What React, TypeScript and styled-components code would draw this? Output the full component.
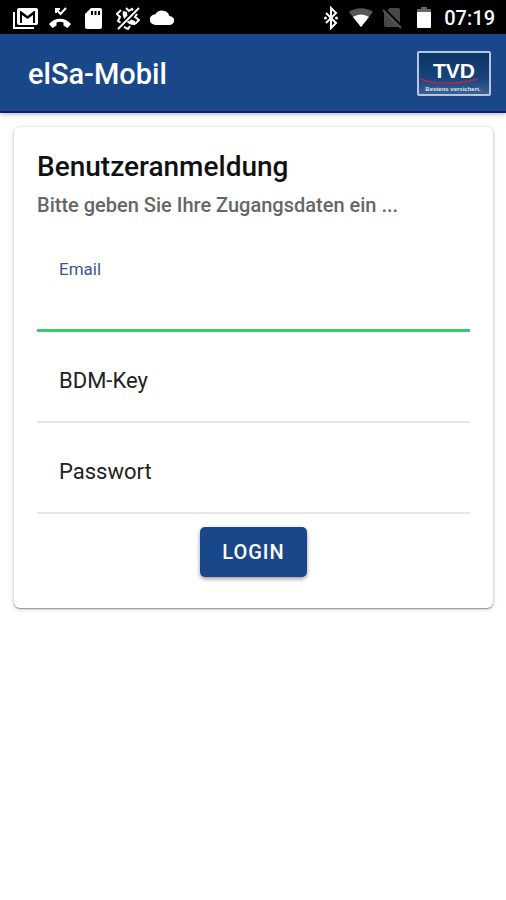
import React, { ReactNode } from "react";
import styled, { createGlobalStyle, css } from "styled-components";

const blue = "#1a4789";

const GlobalStyle = createGlobalStyle`
  * { box-sizing: border-box; }
  body {
    margin: 0;
    background: #fff;
    color: #111;
    font-family: Roboto, "Liberation Sans", sans-serif;
  }
`;

const Page = styled.div`
  display: flex;
  flex-direction: column;
  min-height: 100vh;
  background: #fff;
`;

const Content = styled.main`
  flex: 1;
  padding: 14px 13px 14px 14px;
`;

const StatusBar = styled.div`
  display: flex;
  align-items: center;
  justify-content: space-between;
  height: 34px;
  padding: 2px 11px 0 12px;
  background: #000;
  color: #fff;
`;

const IconRow = styled.div<{ $gap: number }>`
  display: flex;
  align-items: center;
  gap: ${(p) => p.$gap}px;
`;

const StatusSvg = styled.svg`
  display: block;
  flex: none;
  fill: #fff;
`;

const Clock = styled.time`
  font-size: 20px;
  font-weight: 500;
  line-height: 24px;
`;

const Header = styled.header`
  display: flex;
  align-items: center;
  justify-content: space-between;
  height: 79px;
  padding: 2px 15px 0 28px;
  background: ${blue};
  border-bottom: 2px solid #0d1f7c;
  box-shadow: 0 1px 5px rgba(0, 0, 0, 0.3);
`;

const AppTitle = styled.h1`
  margin: 0;
  color: #fff;
  font-size: 29px;
  font-weight: 500;
  line-height: 36px;
`;

const Card = styled.section`
  padding: 24px 23px 31px;
  border-radius: 6px;
  background: #fff;
  box-shadow: 0 1px 1px rgba(0, 0, 0, 0.3), 0 1px 4px rgba(0, 0, 0, 0.25);
`;

const CardTitle = styled.h2`
  margin: 0;
  font-size: 28px;
  font-weight: 500;
  line-height: 32px;
`;

const CardSubtitle = styled.p`
  margin: 10px 0 22px;
  color: #666;
  font-size: 20px;
  font-weight: 500;
  line-height: 24px;
`;

const FieldBox = styled.div<{ $active?: boolean }>`
  display: grid;
  height: 91px;
  padding: 9px 22px 0;
  border-bottom: 2px solid #e6e6e6;
  align-items: center;
  ${(p) =>
    p.$active &&
    css`
      height: 93px;
      padding-top: 0;
      grid-template-rows: 20px 50px;
      align-content: end;
      border-bottom: 3px solid #3cc870;
    `}
`;

const FieldLabel = styled.label<{ $active?: boolean }>`
  grid-area: 1 / 1;
  font-size: ${(p) => (p.$active ? 17 : 22)}px;
  line-height: ${(p) => (p.$active ? 20 : 28)}px;
  color: ${(p) => (p.$active ? "#3c5795" : "#222")};
`;

const FieldInput = styled.input<{ $active?: boolean }>`
  grid-area: ${(p) => (p.$active ? 2 : 1)} / 1;
  width: 100%;
  height: 44px;
  padding: 0;
  border: 0;
  outline: 0;
  background: transparent;
  font: inherit;
  font-size: 22px;
`;

const LoginButton = styled.button`
  display: block;
  height: 50px;
  margin: 13px auto 0;
  padding: 0 22px;
  border: 0;
  border-radius: 5px;
  background: ${blue};
  color: #fff;
  font: 500 20px/24px Roboto, "Liberation Sans", sans-serif;
  letter-spacing: 1px;
  box-shadow: 0 2px 4px rgba(0, 0, 0, 0.4);
`;

function StatusIcon({ w, h = 24, children }: { w: number; h?: number; children: ReactNode }) {
  return (
    <StatusSvg width={w} height={h} viewBox={`0 0 ${w} ${h}`} aria-hidden="true">
      {children}
    </StatusSvg>
  );
}

function Field({ id, label, type = "text", active }: { id: string; label: string; type?: string; active?: boolean }) {
  return (
    <FieldBox $active={active}>
      <FieldLabel htmlFor={id} $active={active}>{label}</FieldLabel>
      <FieldInput id={id} type={type} $active={active} />
    </FieldBox>
  );
}

function Logo() {
  return (
    <svg width="74" height="45" viewBox="0 0 74 45" role="img" aria-label="TVD">
      <defs>
        <linearGradient id="logoFill" x1="0" y1="0" x2="0" y2="1">
          <stop offset="0" stopColor="#0d3568" />
          <stop offset="0.6" stopColor="#15437a" />
          <stop offset="1" stopColor="#3f6491" />
        </linearGradient>
      </defs>
      <rect x="1" y="1" width="72" height="43" rx="1" fill="url(#logoFill)" stroke="#b5c5dd" strokeWidth="2" />
      <path d="M3 28C16 33 40 34 61 28" fill="none" stroke="#a52a55" strokeWidth="1.500" />
      <text x="37" y="27" textAnchor="middle" fill="#fff" fontFamily="Liberation Sans, sans-serif" fontWeight="700" fontSize="21">TVD</text>
      <text x="36" y="40" textAnchor="middle" fill="#dfe6f0" fontFamily="Liberation Sans, sans-serif" fontWeight="700" fontSize="6">Bestens versichert.</text>
    </svg>
  );
}

export default function App() {
  return (
    <Page>
      <GlobalStyle />
      <StatusBar>
        <IconRow $gap={10}>
          <StatusIcon w={26}>
            <path d="M1 6v17h21v-2H3V6z" />
            <path fillRule="evenodd" d="M7 2h17a2 2 0 0 1 2 2v13a2 2 0 0 1-2 2H7a2 2 0 0 1-2-2V4a2 2 0 0 1 2-2zM8 5v12h2V9l5.500 4L21 9v8h2V5h-1l-6.500 5L9 5z" />
          </StatusIcon>
          <StatusIcon w={24}>
            <path d="M8 7V3h4M8 3l4.500 5L18 2" fill="none" stroke="#fff" strokeWidth="2" />
            <path d="M1 18C7 11 17 11 23 18l-3.500 4-4-2.500v-3c-2-1-5-1-7 0v3L4.500 22z" />
          </StatusIcon>
          <StatusIcon w={24}>
            <path fillRule="evenodd" d="M9 2h9a2 2 0 0 1 2 2v17a2 2 0 0 1-2 2H5a2 2 0 0 1-2-2V8zM9 5v4h2V5zm3.500 0v4h2V5zM16 5v4h2V5z" />
          </StatusIcon>
          <StatusIcon w={24}>
            <path d="M7 5l4 1 .5 4-2 1.500 3.500 4 2-2 4 1.500v4c-7 1-14-7-12-14z" />
            <path d="M5 4L1 8l3 3-2 4 3 2M10 2l3 3 3-2 2 3M21 8l-2 3 4 3-4 4M8 21l4 2 2-3" fill="none" stroke="#fff" strokeWidth="2" />
            <path d="M1 23L23 1" stroke="#000" strokeWidth="4" />
            <path d="M2 23L23 2" stroke="#fff" strokeWidth="2" />
          </StatusIcon>
          <StatusIcon w={24}>
            <path d="M19.400 10A7.500 7.500 0 0 0 5.400 8 6 6 0 0 0 6 20h13a5 5 0 0 0 .400-10z" transform="translate(0 1) scale(1 .9)" />
          </StatusIcon>
        </IconRow>
        <IconRow $gap={9}>
          <StatusIcon w={16}>
            <path d="M4 7l10 10-5 5V2l5 5L4 17" fill="none" stroke="#fff" strokeWidth="2" />
            <circle cx="3.500" cy="12" r="1.500" /><circle cx="14.500" cy="12" r="1.500" />
          </StatusIcon>
          <StatusIcon w={26}>
            <path d="M2 6C9 1 19 1 26 6L14 21z" fill="#555" />
            <path d="M6 11C11 7.500 17 7.500 22 11l-8 10z" />
          </StatusIcon>
          <StatusIcon w={22}>
            <path d="M8 2h8a2 2 0 0 1 2 2v15a2 2 0 0 1-2 2H4a2 2 0 0 1-2-2V7z" fill="#484848" />
            <path d="M2 3l18 18" stroke="#000" strokeWidth="3" /><path d="M1 4l18 18" stroke="#555" strokeWidth="2" />
          </StatusIcon>
          <StatusIcon w={22}>
            <path d="M8 1h6v2h4v5H4V3h4z" fill="#666" />
            <path d="M4 6h14v15a1 1 0 0 1-1 1H5a1 1 0 0 1-1-1z" />
          </StatusIcon>
          <Clock>07:19</Clock>
        </IconRow>
      </StatusBar>
      <Header>
        <AppTitle>elSa-Mobil</AppTitle>
        <Logo />
      </Header>
      <Content>
        <Card>
          <CardTitle>Benutzeranmeldung</CardTitle>
          <CardSubtitle>Bitte geben Sie Ihre Zugangsdaten ein ...</CardSubtitle>
          <form onSubmit={(e) => e.preventDefault()}>
            <Field id="email" label="Email" type="email" active />
            <Field id="bdm-key" label="BDM-Key" />
            <Field id="password" label="Passwort" type="password" />
            <LoginButton type="submit">LOGIN</LoginButton>
          </form>
        </Card>
      </Content>
    </Page>
  );
}
